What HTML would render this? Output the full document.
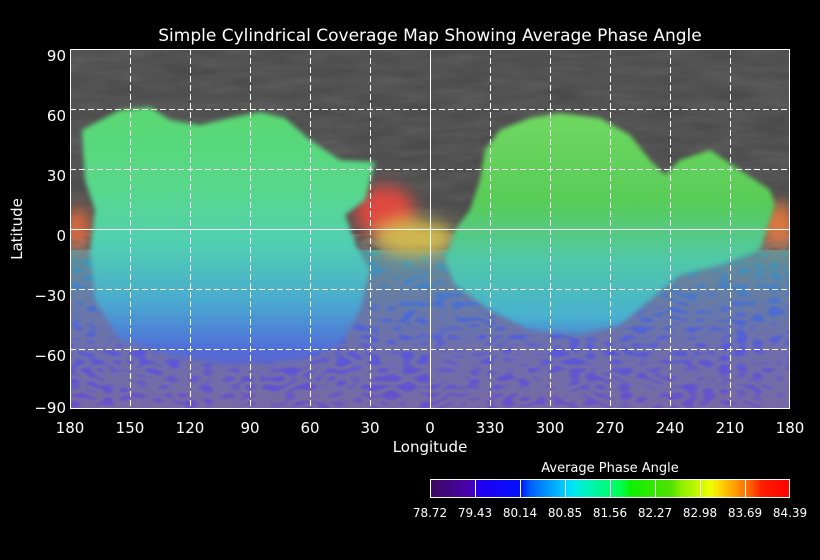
<!DOCTYPE html>
<html><head><meta charset="utf-8"><style>
html,body{margin:0;padding:0;background:#000;width:820px;height:560px;overflow:hidden}
svg{display:block}
text{font-family:"DejaVu Sans","Liberation Sans",sans-serif;fill:#fff}
</style></head><body>
<svg width="820" height="560" viewBox="0 0 820 560" xmlns="http://www.w3.org/2000/svg">
<defs>
<clipPath id="c"><rect x="70" y="49" width="720" height="360"/></clipPath>
<filter id="b" x="-30%" y="-30%" width="160%" height="160%"><feGaussianBlur stdDeviation="8"/></filter>
<filter id="b2" x="-10%" y="-10%" width="120%" height="120%"><feGaussianBlur stdDeviation="2.5"/></filter>
<filter id="n"><feTurbulence type="fractalNoise" baseFrequency="0.02 0.09" numOctaves="3" seed="4"/><feColorMatrix type="saturate" values="0"/></filter>
<filter id="n2"><feTurbulence type="turbulence" baseFrequency="0.06 0.12" numOctaves="1" seed="9"/><feColorMatrix type="matrix" values="0 0 0 0 0.22  0 0 0 0 0.22  0 0 0 0 0.24  0 0 0 -3 1.3"/></filter>
<linearGradient id="cb" x1="0" x2="1">
<stop offset="0" stop-color="#3a0a5a"/><stop offset="0.11" stop-color="#4a00b0"/>
<stop offset="0.14" stop-color="#2000f0"/><stop offset="0.25" stop-color="#0010ff"/>
<stop offset="0.28" stop-color="#0060ff"/><stop offset="0.39" stop-color="#00e0ff"/>
<stop offset="0.42" stop-color="#00f0d0"/><stop offset="0.53" stop-color="#00ff50"/>
<stop offset="0.56" stop-color="#10f000"/><stop offset="0.67" stop-color="#50e000"/>
<stop offset="0.70" stop-color="#90f000"/><stop offset="0.78" stop-color="#f0ff00"/>
<stop offset="0.81" stop-color="#ffd000"/><stop offset="0.89" stop-color="#ff6000"/>
<stop offset="0.92" stop-color="#ff2000"/><stop offset="1" stop-color="#ff0000"/>
</linearGradient>
<linearGradient id="lg" x1="0" y1="105" x2="0" y2="380" gradientUnits="userSpaceOnUse">
<stop offset="0" stop-color="#5ad870"/><stop offset="0.3" stop-color="#58d88a"/>
<stop offset="0.5" stop-color="#50d0b0"/><stop offset="0.72" stop-color="#4aa8d0"/>
<stop offset="0.88" stop-color="#5070d8"/><stop offset="1" stop-color="#6458c8"/>
</linearGradient>
<linearGradient id="rg" x1="0" y1="112" x2="0" y2="340" gradientUnits="userSpaceOnUse">
<stop offset="0" stop-color="#70d860"/><stop offset="0.4" stop-color="#58cc58"/>
<stop offset="0.65" stop-color="#50c8a8"/><stop offset="0.9" stop-color="#48b0d0"/>
<stop offset="1" stop-color="#5080d0"/>
</linearGradient>
<linearGradient id="bot" x1="0" y1="250" x2="0" y2="409" gradientUnits="userSpaceOnUse">
<stop offset="0" stop-color="#40a0a8"/>
<stop offset="0.35" stop-color="#4a70d0"/>
<stop offset="0.65" stop-color="#5a58d8"/>
<stop offset="1" stop-color="#6a50c8"/>
</linearGradient>
</defs>
<g clip-path="url(#c)">
<rect x="70" y="49" width="720" height="360" fill="#484848"/>
<rect x="70" y="49" width="720" height="200" filter="url(#n)" opacity="0.18"/>
<rect x="70" y="250" width="720" height="160" fill="url(#bot)"/>
<rect x="70" y="250" width="720" height="160" filter="url(#n2)" opacity="0.55"/>
<g filter="url(#b)">
<ellipse cx="385" cy="212" rx="30" ry="26" fill="#e04a40"/>
<ellipse cx="415" cy="238" rx="40" ry="18" fill="#d0b850"/>
<ellipse cx="77" cy="228" rx="14" ry="20" fill="#e06a40"/>
<ellipse cx="778" cy="225" rx="18" ry="22" fill="#e07840"/>
</g>
<g filter="url(#b2)">
<path d="M82 130 L120 110 L150 107 L170 120 L200 125 L230 118 L260 112 L285 118 L310 140 L340 160 L375 162 L365 200 L345 215 L358 250 L370 270 L360 310 L340 345 L300 360 L230 365 L170 355 L120 340 L95 300 L90 250 L95 210 L85 180 Z" fill="url(#lg)"/>
<path d="M485 150 L500 130 L530 118 L560 113 L600 118 L630 135 L650 160 L665 175 L680 160 L710 150 L740 170 L770 190 L775 205 L760 250 L720 265 L680 275 L650 300 L620 325 L580 335 L530 330 L490 310 L455 285 L445 260 L455 230 L470 210 L480 180 Z" fill="url(#rg)"/>
</g>
</g>
<g stroke="#fff" stroke-width="1" fill="none" shape-rendering="crispEdges">
<g stroke-dasharray="6,3">
<path d="M130.5 49V409M190.5 49V409M250.5 49V409M310.5 49V409M370.5 49V409M490.5 49V409M550.5 49V409M610.5 49V409M670.5 49V409M730.5 49V409"/>
<path d="M70 109.5H790M70 169.5H790M70 289.5H790M70 349.5H790"/>
</g>
<path d="M430.5 49V409M70 229.5H790"/>
<rect x="70.5" y="49.5" width="719" height="359"/>
</g>
<text x="430" y="41" font-size="17" text-anchor="middle">Simple Cylindrical Coverage Map Showing Average Phase Angle</text>
<g font-size="15" text-anchor="end">
<text x="66" y="61">90</text><text x="66" y="121">60</text><text x="66" y="181">30</text>
<text x="66" y="241">0</text><text x="66" y="301">−30</text><text x="66" y="361">−60</text><text x="66" y="413">−90</text>
</g>
<text transform="translate(22 229) rotate(-90)" font-size="15" text-anchor="middle">Latitude</text>
<g font-size="15" text-anchor="middle">
<text x="70" y="433">180</text><text x="130" y="433">150</text><text x="190" y="433">120</text><text x="250" y="433">90</text>
<text x="310" y="433">60</text><text x="370" y="433">30</text><text x="430" y="433">0</text><text x="490" y="433">330</text>
<text x="550" y="433">300</text><text x="610" y="433">270</text><text x="670" y="433">240</text><text x="730" y="433">210</text><text x="790" y="433">180</text>
</g>
<text x="430" y="452" font-size="15" text-anchor="middle">Longitude</text>
<text x="610" y="472" font-size="13" text-anchor="middle">Average Phase Angle</text>
<rect x="430" y="479" width="360" height="19" fill="url(#cb)"/>
<g stroke="#fff" fill="none" shape-rendering="crispEdges">
<rect x="430.5" y="479.5" width="359" height="18"/>
<path d="M475.5 479v19M520.5 479v19M565.5 479v19M610.5 479v19M655.5 479v19M700.5 479v19M745.5 479v19"/>
</g>
<g font-size="12" text-anchor="middle">
<text x="430" y="517">78.72</text><text x="475" y="517">79.43</text><text x="520" y="517">80.14</text>
<text x="565" y="517">80.85</text><text x="610" y="517">81.56</text><text x="655" y="517">82.27</text>
<text x="700" y="517">82.98</text><text x="745" y="517">83.69</text><text x="790" y="517">84.39</text>
</g>
</svg>
</body></html>
